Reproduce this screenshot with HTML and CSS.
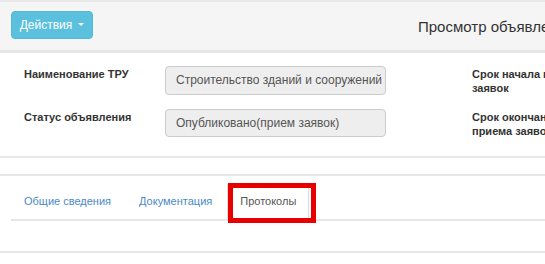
FILE: index.html
```html
<!DOCTYPE html>
<html lang="ru">
<head>
<meta charset="utf-8">
<title>Просмотр объявления</title>
<link rel="stylesheet" href="styles.css">
</head>
<body>
<div class="page">
  <header class="topbar">
    <button class="btn-actions" type="button">Действия <span class="caret"></span></button>
    <h1 class="title">Просмотр объявления о закупке</h1>
  </header>
  <section class="details">
    <div class="label">Наименование ТРУ</div>
    <div class="cell"><div class="input">Строительство зданий и сооружений</div></div>
    <div class="label label-right">Срок начала приема заявок</div>
    <div class="label">Статус объявления</div>
    <div class="cell"><div class="input input-short">Опубликовано(прием заявок)</div></div>
    <div class="label label-right">Срок окончания приема заявок</div>
  </section>
  <div class="spacer"></div>
  <nav class="tabs">
    <a class="tab">Общие сведения</a>
    <a class="tab">Документация</a>
    <a class="tab tab-active">Протоколы</a>
  </nav>
  <div class="tab-content"></div>
</div>
</body>
</html>
```
FILE: styles.css
```css
html, body {
  margin: 0;
  padding: 0;
  background: #fff;
  overflow: hidden;
}
body {
  font-family: "Liberation Sans", Arial, sans-serif;
  font-size: 11px;
  color: #333;
}
.page {
  width: 900px;
}
.topbar {
  display: flex;
  align-items: center;
  height: 48px;
  padding: 0 11px;
  background: #f5f5f5;
  border-top: 2px solid #e8e8e8;
  border-bottom: 3px solid #e6e6e6;
  box-sizing: content-box;
}
.btn-actions {
  height: 28px;
  width: 82px;
  padding: 0;
  background: #5bc0de;
  border: 1px solid #4fbadb;
  border-radius: 4px;
  color: #fff;
  font-family: inherit;
  font-size: 12px;
  display: flex;
  align-items: center;
  justify-content: center;
  gap: 4px;
  margin-top: -3px;
}
.caret {
  display: inline-block;
  width: 0;
  height: 0;
  border-left: 3px solid transparent;
  border-right: 3px solid transparent;
  border-top: 3px solid #fff;
  margin-left: 2px;
}
.title {
  margin: 0 0 0 325px;
  font-size: 15px;
  font-weight: normal;
  color: #333;
  white-space: nowrap;
}
.details {
  display: grid;
  grid-template-columns: 141px 307px 130px;
  row-gap: 14px;
  padding: 13px 0 18px 24px;
  border-bottom: 2px solid #e8e8e8;
}
.label {
  font-weight: bold;
  line-height: 14px;
  padding-top: 1px;
  color: #333;
}
.input {
  width: 221px;
  height: 29px;
  box-sizing: border-box;
  background: #eee;
  border: 1px solid #ccc;
  border-radius: 4px;
  padding: 0 10px;
  line-height: 27px;
  font-size: 12px;
  color: #555;
  white-space: nowrap;
  overflow: hidden;
}
.input-short {
  height: 28px;
  line-height: 26px;
}
.spacer {
  height: 16px;
  border-bottom: 2px solid #e8e8e8;
}
.tabs {
  display: flex;
  margin: 8px 0 0 11px;
  border-bottom: 2px solid #e6e6e6;
}
.tab {
  display: block;
  padding: 8px 12px 9px;
  margin-right: 2px;
  line-height: 17px;
  color: #4a89c8;
  border: 1px solid transparent;
  border-bottom: 0;
  position: relative;
}
.tab-active {
  color: #555;
  border-color: #ddd;
  background: #fff;
}
.tab-active::after {
  content: "";
  position: absolute;
  top: -2px;
  left: 0;
  right: -8px;
  bottom: -4px;
  border: 5px solid #e60000;
}
.tab-content {
  height: 30px;
  border-bottom: 2px solid #e6e6e6;
}
```
